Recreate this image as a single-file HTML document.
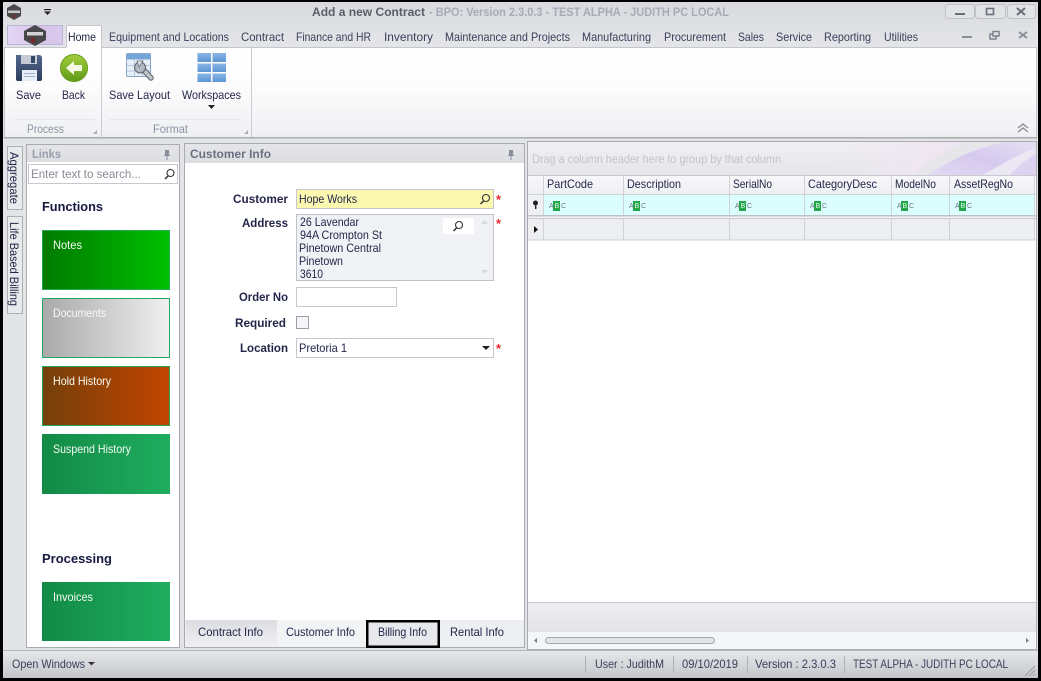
<!DOCTYPE html>
<html lang="en">
<head>
<meta charset="utf-8">
<title>Add a new Contract</title>
<style>
html,body{margin:0;padding:0;background:#000;width:1041px;height:681px;overflow:hidden}
svg{display:block}
text{font-family:"Liberation Sans",sans-serif;font-size:12px;fill:#2f3350}
.tab{fill:#3a3f5a}
.lb{font-weight:bold;fill:#23264a}
.w{fill:#f6fbf4}
.g{fill:#8d93a3}
.abc{font-size:7px;fill:#6d7480}
</style>
</head>
<body>
<svg width="1041" height="681" viewBox="0 0 1041 681" xmlns="http://www.w3.org/2000/svg">
<defs>
<linearGradient id="tb" x1="0" y1="0" x2="0" y2="1"><stop offset="0" stop-color="#d8dade"/><stop offset="1" stop-color="#e4e5e8"/></linearGradient>
<linearGradient id="rib" x1="0" y1="0" x2="0" y2="1"><stop offset="0" stop-color="#ffffff"/><stop offset=".45" stop-color="#fcfcfd"/><stop offset="1" stop-color="#eff0f2"/></linearGradient>
<linearGradient id="app" x1="0" y1="0" x2="1" y2="0"><stop offset="0" stop-color="#e2d6f4"/><stop offset=".6" stop-color="#dcc4ea"/><stop offset="1" stop-color="#d6c9ec"/></linearGradient>
<linearGradient id="hd" x1="0" y1="0" x2="0" y2="1"><stop offset="0" stop-color="#e4e5e8"/><stop offset="1" stop-color="#dddee2"/></linearGradient>
<linearGradient id="st" x1="0" y1="0" x2="0" y2="1"><stop offset="0" stop-color="#e8e9eb"/><stop offset="1" stop-color="#c5c6cb"/></linearGradient>
<linearGradient id="t1" x1="0" y1="0" x2="1" y2="0"><stop offset="0" stop-color="#007a00"/><stop offset="1" stop-color="#00c000"/></linearGradient>
<linearGradient id="t2" x1="0" y1="0" x2="1" y2="0"><stop offset="0" stop-color="#a9a9a9"/><stop offset="1" stop-color="#f0f0f0"/></linearGradient>
<linearGradient id="t3" x1="0" y1="0" x2="1" y2="0"><stop offset="0" stop-color="#74400a"/><stop offset="1" stop-color="#c44400"/></linearGradient>
<linearGradient id="t4" x1="0" y1="0" x2="1" y2="0"><stop offset="0" stop-color="#128a45"/><stop offset="1" stop-color="#1fae60"/></linearGradient>
<linearGradient id="grp" x1="0" y1="0" x2="0" y2="1"><stop offset="0" stop-color="#f0f0f3"/><stop offset="1" stop-color="#e5e6ea"/></linearGradient>
<linearGradient id="grp2" x1="0" y1="0" x2="1" y2="0"><stop offset="0" stop-color="#efe6f2" stop-opacity="0"/><stop offset=".5" stop-color="#efe6f2"/><stop offset="1" stop-color="#ebe4f4"/></linearGradient>
<linearGradient id="hdr" x1="0" y1="0" x2="0" y2="1"><stop offset="0" stop-color="#f8f8fa"/><stop offset="1" stop-color="#eeeff2"/></linearGradient>
<linearGradient id="tabg" x1="0" y1="0" x2="0" y2="1"><stop offset="0" stop-color="#dcdde1"/><stop offset="1" stop-color="#f0f0f3"/></linearGradient>
<linearGradient id="ftr" x1="0" y1="0" x2="0" y2="1"><stop offset="0" stop-color="#edeef0"/><stop offset="1" stop-color="#e2e3e7"/></linearGradient>
<linearGradient id="green" x1="0" y1="0" x2="0" y2="1"><stop offset="0" stop-color="#a4cf3c"/><stop offset="1" stop-color="#5f9a17"/></linearGradient>
<linearGradient id="blue" x1="0" y1="0" x2="0" y2="1"><stop offset="0" stop-color="#8ab6e6"/><stop offset="1" stop-color="#5c94d2"/></linearGradient>
<linearGradient id="flop" x1="0" y1="0" x2="0" y2="1"><stop offset="0" stop-color="#54688c"/><stop offset="1" stop-color="#2c3c5c"/></linearGradient>
<linearGradient id="swoosh" x1="0" y1="1" x2="1" y2="0"><stop offset="0" stop-color="#e2d9f3"/><stop offset=".5" stop-color="#d6c9ef"/><stop offset="1" stop-color="#e6e0f2"/></linearGradient>
</defs>

<!-- window frame -->
<rect x="0" y="0" width="1041" height="681" fill="#000"/>
<rect x="3" y="2" width="1035" height="676" fill="#e3e4e7"/>
<rect x="3" y="2" width="1035" height="44" fill="url(#tb)"/>

<!-- small logo + QAT -->
<polygon points="14,4 21,8 21,16 14,20 7,16 7,8" fill="#4b4b4e"/>
<rect x="8" y="10.500" width="12" height="2.500" fill="#c8c8cc"/>
<circle cx="14" cy="16" r="1.500" fill="#7c2a2a"/>
<rect x="44" y="9" width="7" height="1.200" fill="#222"/>
<polygon points="44,11.500 51,11.500 47.500,15" fill="#222"/>

<!-- title -->
<text x="312" y="16" class="lb" style="fill:#5b5e68" textLength="113" lengthAdjust="spacingAndGlyphs">Add a new Contract</text>
<text x="429" y="16" font-weight="bold" style="fill:#a6abb6" textLength="300" lengthAdjust="spacingAndGlyphs">- BPO: Version 2.3.0.3 - TEST ALPHA - JUDITH PC LOCAL</text>

<!-- window buttons -->
<rect x="945.500" y="4.500" width="29" height="14" rx="3" fill="#e2e3e6" stroke="#c0c2c8"/>
<rect x="975.500" y="4.500" width="30" height="14" rx="3" fill="#e2e3e6" stroke="#c0c2c8"/>
<rect x="1007.500" y="4.500" width="28" height="14" rx="3" fill="#e2e3e6" stroke="#c0c2c8"/>
<rect x="955" y="13" width="10" height="2" fill="#6a6e7a"/>
<rect x="986.500" y="8.500" width="7" height="6" fill="none" stroke="#6a6e7a" stroke-width="1.600"/>
<path d="M1017 8l8 7M1025 8l-8 7" stroke="#6a6e7a" stroke-width="2" fill="none"/>

<!-- app button -->
<rect x="7.500" y="25.500" width="55" height="19" fill="url(#app)" stroke="#b9b5d4"/>
<polygon points="35,25 46,31 46,40 35,46 24,40 24,31" fill="#48484b"/>
<rect x="27" y="32" width="16" height="3.500" fill="#d4d4d8"/>
<circle cx="33" cy="40.500" r="2.500" fill="#742828"/>

<!-- ribbon body -->
<rect x="5" y="47" width="1031" height="90" fill="url(#rib)"/>
<path d="M4.500 138V47.500H66M102 47.500H1036.500V138" fill="none" stroke="#c4c6cb"/>
<rect x="4" y="137" width="1033" height="1.500" fill="#a9abb1"/>
<rect x="101" y="47" width="1" height="90" fill="#c9cbd0"/>
<rect x="251" y="47" width="1" height="90" fill="#c9cbd0"/>
<rect x="15" y="119" width="80" height="1" fill="#e5e6e9"/>
<rect x="110" y="119" width="130" height="1" fill="#e5e6e9"/>

<!-- tabs -->
<path d="M66.500 47.500V27q0-1.500 1.500-1.500h32q1.500 0 1.500 1.500V47.500" fill="#fff" stroke="#c4c6cb"/>
<rect x="67" y="46" width="34" height="2.500" fill="#fff"/>
<text x="68" y="41" style="fill:#1f2340" textLength="28" lengthAdjust="spacingAndGlyphs">Home</text>
<text x="109" y="41" class="tab" textLength="120" lengthAdjust="spacingAndGlyphs">Equipment and Locations</text>
<text x="241" y="41" class="tab" textLength="43" lengthAdjust="spacingAndGlyphs">Contract</text>
<text x="296" y="41" class="tab" textLength="75" lengthAdjust="spacingAndGlyphs">Finance and HR</text>
<text x="384" y="41" class="tab" textLength="49" lengthAdjust="spacingAndGlyphs">Inventory</text>
<text x="445" y="41" class="tab" textLength="125" lengthAdjust="spacingAndGlyphs">Maintenance and Projects</text>
<text x="582" y="41" class="tab" textLength="69" lengthAdjust="spacingAndGlyphs">Manufacturing</text>
<text x="664" y="41" class="tab" textLength="62" lengthAdjust="spacingAndGlyphs">Procurement</text>
<text x="738" y="41" class="tab" textLength="26" lengthAdjust="spacingAndGlyphs">Sales</text>
<text x="776" y="41" class="tab" textLength="36" lengthAdjust="spacingAndGlyphs">Service</text>
<text x="824" y="41" class="tab" textLength="47" lengthAdjust="spacingAndGlyphs">Reporting</text>
<text x="884" y="41" class="tab" textLength="34" lengthAdjust="spacingAndGlyphs">Utilities</text>
<rect x="962" y="36" width="10" height="2" fill="#8a8e99"/>
<rect x="990" y="34" width="6" height="5" fill="none" stroke="#777c88" stroke-width="1.400"/>
<rect x="993" y="31.500" width="6" height="4.500" fill="#e3e4e7" stroke="#777c88" stroke-width="1.400"/>
<path d="M1019 32l8 6M1027 32l-8 6" stroke="#8a8e99" stroke-width="2" fill="none"/>

<!-- Save icon -->
<path d="M16 55h23q3 0 3 3v21q0 2-2 2H18q-2 0-2-2z" fill="url(#flop)"/>
<rect x="21" y="55" width="16" height="9" fill="#c5ccd6"/>
<rect x="31" y="56" width="4" height="7" fill="#34486a"/>
<rect x="22" y="70" width="15" height="11" fill="#e8eef7"/>
<rect x="24" y="73" width="11" height="1" fill="#9fb3cf"/>
<rect x="24" y="76" width="11" height="1" fill="#9fb3cf"/>
<!-- Back icon -->
<circle cx="74" cy="68" r="14" fill="url(#green)"/>
<circle cx="74" cy="68" r="13.500" fill="none" stroke="#6c9d20" stroke-width="1"/>
<path d="M66 68l8-7v4h8v6h-8v4z" fill="#f4f8e4"/>
<text x="16" y="99" style="fill:#23264a" textLength="25" lengthAdjust="spacingAndGlyphs">Save</text>
<text x="62" y="99" style="fill:#23264a" textLength="23" lengthAdjust="spacingAndGlyphs">Back</text>
<text x="27" y="133" class="g" textLength="37" lengthAdjust="spacingAndGlyphs">Process</text>
<path d="M97 130v4h-4z" fill="#a8abb2"/>

<!-- Save Layout icon -->
<rect x="126.500" y="53.500" width="24" height="23" rx="1" fill="#e6eef8" stroke="#8aa7cb"/>
<rect x="127" y="54" width="23.500" height="5.500" fill="#76a5d8"/>
<path d="M127 65.500h23M127 71h23M134.500 59v17M142.500 59v17" stroke="#b4c8de" fill="none"/>
<path d="M142 68l9 10" stroke="#5f636c" stroke-width="5.500" stroke-linecap="round"/>
<path d="M142 68l9 10" stroke="#c0c4cb" stroke-width="3.500" stroke-linecap="round"/>
<circle cx="140" cy="67.500" r="5.500" fill="#b4b8c0" stroke="#5f636c"/>
<path d="M139 67l4-6h-6z" fill="#dfe8f3" stroke="#5f636c" stroke-width=".7"/>
<text x="109" y="99" style="fill:#23264a" textLength="61" lengthAdjust="spacingAndGlyphs">Save Layout</text>

<!-- Workspaces icon -->
<g fill="url(#blue)">
<rect x="197.500" y="53" width="13.500" height="9"/><rect x="212.500" y="53" width="13.500" height="9"/>
<rect x="197.500" y="63.500" width="13.500" height="8.500"/><rect x="212.500" y="63.500" width="13.500" height="8.500"/>
<rect x="197.500" y="73.500" width="13.500" height="8.500"/><rect x="212.500" y="73.500" width="13.500" height="8.500"/>
</g>
<text x="182" y="99" style="fill:#23264a" textLength="59" lengthAdjust="spacingAndGlyphs">Workspaces</text>
<polygon points="208,105 215,105 211.500,109" fill="#222"/>
<text x="153" y="133" class="g" textLength="35" lengthAdjust="spacingAndGlyphs">Format</text>
<path d="M248 130v4h-4z" fill="#a8abb2"/>

<!-- collapse chevrons -->
<path d="M1018 128l5-4 5 4M1018 132l5-4 5 4" fill="none" stroke="#8a8d96" stroke-width="1.300"/>

<!-- side tabs -->
<rect x="7.500" y="146.500" width="15" height="63" fill="#e9eaec" stroke="#aeb0b6"/>
<rect x="7.500" y="216.500" width="15" height="97" fill="#e9eaec" stroke="#aeb0b6"/>
<text transform="translate(10 152) rotate(90)" style="fill:#23264a" textLength="52" lengthAdjust="spacingAndGlyphs">Aggregate</text>
<text transform="translate(10 222) rotate(90)" style="fill:#23264a" textLength="84" lengthAdjust="spacingAndGlyphs">Life Based Billing</text>

<!-- Links panel -->
<rect x="26.500" y="144.500" width="153" height="503" fill="#fff" stroke="#a9abb1"/>
<rect x="27" y="145" width="152" height="17" fill="url(#hd)"/>
<text x="32" y="158" font-weight="bold" style="fill:#9a9fad" textLength="29" lengthAdjust="spacingAndGlyphs">Links</text>
<rect x="165" y="150" width="4" height="5" fill="#8a8e99"/>
<path d="M164 155.500h6M167 156v4" stroke="#8a8e99" fill="none"/>
<rect x="28.500" y="164.500" width="149" height="19" fill="#fff" stroke="#c6c8cd"/>
<text x="31" y="178" style="fill:#878b96" textLength="110" lengthAdjust="spacingAndGlyphs">Enter text to search...</text>
<circle cx="170.500" cy="173" r="3.500" fill="none" stroke="#333" stroke-width="1.100"/>
<path d="M168 176l-3 3" stroke="#333" stroke-width="1.500"/>

<text x="42" y="211" font-weight="bold" style="fill:#171a40;font-size:13px" textLength="61" lengthAdjust="spacingAndGlyphs">Functions</text>

<rect x="42" y="230" width="128" height="60" fill="url(#t1)"/>
<rect x="42.500" y="230.500" width="127" height="59" fill="none" stroke="#21a85a"/>
<text x="53" y="249" class="w" textLength="29" lengthAdjust="spacingAndGlyphs">Notes</text>

<rect x="42" y="298" width="128" height="60" fill="url(#t2)"/>
<rect x="42.500" y="298.500" width="127" height="59" fill="none" stroke="#21a85a"/>
<text x="53" y="317" class="w" textLength="53" lengthAdjust="spacingAndGlyphs">Documents</text>

<rect x="42" y="366" width="128" height="60" fill="url(#t3)"/>
<rect x="42.500" y="366.500" width="127" height="59" fill="none" stroke="#21a85a"/>
<text x="53" y="385" class="w" textLength="58" lengthAdjust="spacingAndGlyphs">Hold History</text>

<rect x="42" y="434" width="128" height="60" fill="url(#t4)"/>
<text x="53" y="453" class="w" textLength="78" lengthAdjust="spacingAndGlyphs">Suspend History</text>

<text x="42" y="563" font-weight="bold" style="fill:#171a40;font-size:13px" textLength="70" lengthAdjust="spacingAndGlyphs">Processing</text>

<rect x="42" y="582" width="128" height="59" fill="url(#t4)"/>
<text x="53" y="601" class="w" textLength="40" lengthAdjust="spacingAndGlyphs">Invoices</text>

<!-- Customer Info panel -->
<rect x="184.500" y="143.500" width="340" height="504" fill="#fff" stroke="#a9abb1"/>
<rect x="185" y="144" width="339" height="19" fill="url(#hd)"/>
<text x="190" y="158" font-weight="bold" style="fill:#6a7080" textLength="81" lengthAdjust="spacingAndGlyphs">Customer Info</text>
<rect x="509" y="150" width="4" height="5" fill="#8a8e99"/>
<path d="M508 155.500h6M511 156v4" stroke="#8a8e99" fill="none"/>

<text x="233" y="203" class="lb" textLength="55" lengthAdjust="spacingAndGlyphs">Customer</text>
<text x="242" y="227" class="lb" textLength="46" lengthAdjust="spacingAndGlyphs">Address</text>
<text x="239" y="301" class="lb" textLength="49" lengthAdjust="spacingAndGlyphs">Order No</text>
<text x="235" y="327" class="lb" textLength="51" lengthAdjust="spacingAndGlyphs">Required</text>
<text x="240" y="352" class="lb" textLength="48" lengthAdjust="spacingAndGlyphs">Location</text>

<rect x="296.500" y="189.500" width="197" height="19" fill="#fbf8b0" stroke="#c4c6cb"/>
<text x="299" y="203" style="fill:#23264a" textLength="58" lengthAdjust="spacingAndGlyphs">Hope Works</text>
<circle cx="486" cy="198" r="3.500" fill="none" stroke="#333" stroke-width="1.100"/>
<path d="M483.500 201l-3 3" stroke="#333" stroke-width="1.500"/>
<text x="496" y="204" font-weight="bold" style="fill:#e8282a;font-size:13px">*</text>

<rect x="296.500" y="214.500" width="197" height="66" fill="#f1f2f6" stroke="#c0c2c8"/>
<text x="300" y="226" style="fill:#23264a" textLength="59" lengthAdjust="spacingAndGlyphs">26 Lavendar</text>
<text x="300" y="239" style="fill:#23264a" textLength="82" lengthAdjust="spacingAndGlyphs">94A Crompton St</text>
<text x="299" y="252" style="fill:#23264a" textLength="82" lengthAdjust="spacingAndGlyphs">Pinetown Central</text>
<text x="299" y="265" style="fill:#23264a" textLength="44" lengthAdjust="spacingAndGlyphs">Pinetown</text>
<text x="300" y="278" style="fill:#23264a" textLength="23" lengthAdjust="spacingAndGlyphs">3610</text>
<rect x="443" y="218" width="31" height="16" fill="#fff"/>
<circle cx="459" cy="225" r="3.500" fill="none" stroke="#333" stroke-width="1.100"/>
<path d="M456.500 228l-3 3" stroke="#333" stroke-width="1.500"/>
<polygon points="481,224 488,224 484.500,220" fill="#d7d8dd"/>
<polygon points="481,270 488,270 484.500,274" fill="#d7d8dd"/>
<text x="496" y="228" font-weight="bold" style="fill:#e8282a;font-size:13px">*</text>

<rect x="296.500" y="287.500" width="100" height="19" fill="#fff" stroke="#c6c8cd"/>
<rect x="296.500" y="316.500" width="12" height="12" fill="#f5f5f7" stroke="#9da0a8"/>
<rect x="296.500" y="338.500" width="197" height="19" fill="#fff" stroke="#c6c8cd"/>
<text x="299" y="352" style="fill:#23264a" textLength="48" lengthAdjust="spacingAndGlyphs">Pretoria 1</text>
<polygon points="482,346 490,346 486,350" fill="#222"/>
<text x="496" y="353" font-weight="bold" style="fill:#e8282a;font-size:13px">*</text>

<!-- bottom tabs -->
<rect x="185" y="620" width="339" height="27" fill="#eeeff2"/>
<rect x="186" y="620" width="91" height="27" fill="url(#tabg)"/>
<rect x="277" y="620" width="89" height="27" fill="#f2f3f5"/>
<text x="198" y="636" style="fill:#23264a" textLength="65" lengthAdjust="spacingAndGlyphs">Contract Info</text>
<text x="286" y="636" style="fill:#23264a" textLength="69" lengthAdjust="spacingAndGlyphs">Customer Info</text>
<rect x="367.250" y="621.250" width="71.500" height="25.500" fill="#e8e9ec" stroke="#000" stroke-width="2.500"/>
<text x="378" y="636" style="fill:#23264a" textLength="49" lengthAdjust="spacingAndGlyphs">Billing Info</text>
<text x="450" y="636" style="fill:#23264a" textLength="54" lengthAdjust="spacingAndGlyphs">Rental Info</text>

<!-- grid -->
<rect x="527.500" y="141.500" width="509" height="508" fill="#fff" stroke="#a9abb1"/>
<rect x="528" y="142" width="508" height="33" fill="url(#grp)"/>
<rect x="830" y="142" width="206" height="33" fill="url(#grp2)"/>
<path d="M968 142C945 150 925 162 914 175H928C950 160 975 148 1005 142Z" fill="#e6e6ea"/>
<path d="M1005 142C975 148 950 160 928 175H982C1000 166 1018 154 1036 148V142Z" fill="url(#swoosh)"/>
<path d="M1036 148C1018 154 1000 166 982 175H1010C1018 166 1028 158 1036 154Z" fill="#ebe8f3"/>
<path d="M1036 154C1028 158 1018 166 1010 175H1036Z" fill="#ddd3f0"/>
<text x="532" y="163" style="fill:#c2c4cb" textLength="249" lengthAdjust="spacingAndGlyphs">Drag a column header here to group by that column</text>

<rect x="528" y="175" width="507" height="20" fill="url(#hdr)"/>
<rect x="528" y="175" width="508" height="1" fill="#c8cad0"/>
<rect x="528" y="194" width="508" height="1" fill="#cfd1d6"/>
<rect x="528" y="195" width="15" height="20" fill="#eef0f3"/>
<rect x="543" y="195" width="492" height="20" fill="#dbfdfd"/>
<rect x="528" y="215" width="508" height="1.500" fill="#bfc1c7"/>
<rect x="528" y="216.500" width="508" height="1.500" fill="#f4f4f6"/>
<rect x="528" y="218" width="508" height="1" fill="#c8cad0"/>
<rect x="528" y="219" width="507" height="21" fill="#eeeff1"/>
<rect x="528" y="239.500" width="508" height="1" fill="#cfd1d6"/>
<g fill="#d0d2d7">
<rect x="543" y="175" width="1" height="40"/><rect x="623" y="175" width="1" height="40"/><rect x="729" y="175" width="1" height="40"/><rect x="804" y="175" width="1" height="40"/><rect x="891" y="175" width="1" height="40"/><rect x="949" y="175" width="1" height="40"/><rect x="1034" y="175" width="1" height="65"/>
<rect x="543" y="219" width="1" height="21"/><rect x="623" y="219" width="1" height="21"/><rect x="729" y="219" width="1" height="21"/><rect x="804" y="219" width="1" height="21"/><rect x="891" y="219" width="1" height="21"/><rect x="949" y="219" width="1" height="21"/>
</g>
<text x="547" y="188" style="fill:#23264a" textLength="46" lengthAdjust="spacingAndGlyphs">PartCode</text>
<text x="627" y="188" style="fill:#23264a" textLength="54" lengthAdjust="spacingAndGlyphs">Description</text>
<text x="733" y="188" style="fill:#23264a" textLength="39" lengthAdjust="spacingAndGlyphs">SerialNo</text>
<text x="808" y="188" style="fill:#23264a" textLength="69" lengthAdjust="spacingAndGlyphs">CategoryDesc</text>
<text x="895" y="188" style="fill:#23264a" textLength="41" lengthAdjust="spacingAndGlyphs">ModelNo</text>
<text x="954" y="188" style="fill:#23264a" textLength="59" lengthAdjust="spacingAndGlyphs">AssetRegNo</text>

<!-- filter icon and row pointer -->
<circle cx="535.500" cy="203" r="2.500" fill="#222"/>
<rect x="535" y="204" width="1.400" height="5" fill="#222"/>
<polygon points="534,226 534,233 538,229.500" fill="#111"/>

<!-- ABC markers -->
<g>
<rect x="553" y="201" width="7" height="10" fill="#22a84a"/><text x="549" y="208" class="abc">A</text><text x="554.500" y="208" class="abc" style="fill:#e8f8ec">B</text><text x="561" y="208" class="abc">C</text>
<rect x="633" y="201" width="7" height="10" fill="#22a84a"/><text x="629" y="208" class="abc">A</text><text x="634.500" y="208" class="abc" style="fill:#e8f8ec">B</text><text x="641" y="208" class="abc">C</text>
<rect x="739" y="201" width="7" height="10" fill="#22a84a"/><text x="735" y="208" class="abc">A</text><text x="740.500" y="208" class="abc" style="fill:#e8f8ec">B</text><text x="747" y="208" class="abc">C</text>
<rect x="814" y="201" width="7" height="10" fill="#22a84a"/><text x="810" y="208" class="abc">A</text><text x="815.500" y="208" class="abc" style="fill:#e8f8ec">B</text><text x="822" y="208" class="abc">C</text>
<rect x="901" y="201" width="7" height="10" fill="#22a84a"/><text x="897" y="208" class="abc">A</text><text x="902.500" y="208" class="abc" style="fill:#e8f8ec">B</text><text x="909" y="208" class="abc">C</text>
<rect x="959" y="201" width="7" height="10" fill="#22a84a"/><text x="955" y="208" class="abc">A</text><text x="960.500" y="208" class="abc" style="fill:#e8f8ec">B</text><text x="967" y="208" class="abc">C</text>
</g>

<!-- grid footer + scrollbar -->
<rect x="528" y="602" width="508" height="1" fill="#c4c6cc"/>
<rect x="528" y="603" width="508" height="29" fill="url(#ftr)"/>
<rect x="528" y="632" width="508" height="17" fill="#f5f6f8"/>
<rect x="545.500" y="637.500" width="169" height="6" rx="3" fill="#e3e4e8" stroke="#a4a7ae"/>
<polygon points="537,638 537,643 534,640.500" fill="#777c88"/>
<polygon points="1026,638 1026,643 1029,640.500" fill="#777c88"/>

<!-- status bar -->
<rect x="3" y="650" width="1035" height="28" fill="url(#st)"/>
<rect x="3" y="650" width="1035" height="1" fill="#b4b6bc"/>
<text x="12" y="668" class="tab" textLength="73" lengthAdjust="spacingAndGlyphs">Open Windows</text>
<polygon points="88,662 95,662 91.500,665.500" fill="#333"/>
<g fill="#aeb0b7">
<rect x="585" y="656" width="1" height="17"/><rect x="673" y="656" width="1" height="17"/><rect x="747" y="656" width="1" height="17"/><rect x="844" y="656" width="1" height="17"/>
</g>
<text x="595" y="668" class="tab" textLength="69" lengthAdjust="spacingAndGlyphs">User : JudithM</text>
<text x="682" y="668" class="tab" textLength="56" lengthAdjust="spacingAndGlyphs">09/10/2019</text>
<text x="755" y="668" class="tab" textLength="81" lengthAdjust="spacingAndGlyphs">Version : 2.3.0.3</text>
<text x="853" y="668" class="tab" textLength="155" lengthAdjust="spacingAndGlyphs">TEST ALPHA - JUDITH PC LOCAL</text>
<path d="M1025 676l10-10M1029 676l6-6M1033 676l2-2" stroke="#9a9da5" fill="none"/>
</svg>
</body>
</html>
